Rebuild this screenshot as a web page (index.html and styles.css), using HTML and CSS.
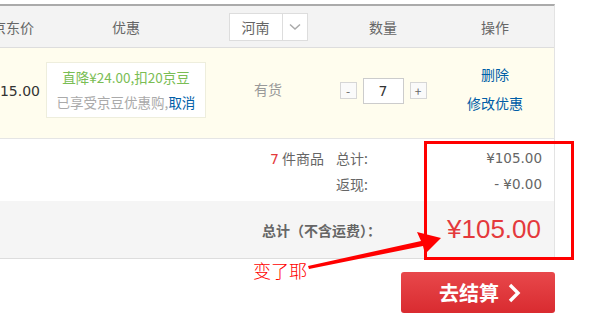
FILE: index.html
```html
<!DOCTYPE html>
<html lang="zh-CN">
<head>
    <meta charset="UTF-8">
    <meta name="viewport" content="width=device-width, initial-scale=1.0">
    <title>购物车</title>
    <link rel="stylesheet" href="styles.css">
</head>
<body>
    <div class="page">
        <div class="cart">
            <div class="cart-head">
                <div class="col">京东价</div>
                <div class="col">优惠</div>
                <div class="col">
                    <div class="area-select">
                        <span class="area-name">河南</span>
                        <span class="area-arrow">
                            <svg width="12" height="8" viewBox="0 0 12 8"><path d="M1 1.5 L6 6 L11 1.5" fill="none" stroke="#aaa" stroke-width="1.5"/></svg>
                        </span>
                    </div>
                </div>
                <div class="col">数量</div>
                <div class="col">操作</div>
            </div>
            <div class="cart-item">
                <div class="col price">¥15.00</div>
                <div class="col">
                    <div class="promo">
                        <div class="promo-main">直降¥24.00,扣20京豆</div>
                        <div class="promo-sub">已享受京豆优惠购,<a href="#">取消</a></div>
                    </div>
                </div>
                <div class="col stock">有货</div>
                <div class="col">
                    <div class="qty">
                        <span class="qty-btn">-</span>
                        <span class="qty-input">7</span>
                        <span class="qty-btn">+</span>
                    </div>
                </div>
                <div class="col ops">
                    <a href="#">删除</a>
                    <a href="#">修改优惠</a>
                </div>
            </div>
            <div class="summary">
                <div class="sum-row">
                    <span class="count"><em>7</em> 件商品</span>
                    <span class="sum-label">总计:</span>
                    <span class="sum-value">¥105.00</span>
                </div>
                <div class="sum-row">
                    <span class="sum-label">返现:</span>
                    <span class="sum-value">- ¥0.00</span>
                </div>
            </div>
            <div class="total">
                <span class="total-label">总计（不含运费）：</span>
                <span class="total-value">¥105.00</span>
            </div>
        </div>
        <div class="checkout-bar">
            <a class="checkout" href="#">去结算
                <svg width="14" height="20" viewBox="0 0 14 20"><path d="M3 2 L11 10 L3 18" fill="none" stroke="#fff" stroke-width="3.4"/></svg>
            </a>
        </div>

        <div class="mark-box"></div>
        <svg class="mark-arrow" width="600" height="321" viewBox="0 0 600 321">
            <polygon points="308,266 421,241 417,232 441,238 425,254 423,246 309,269" fill="#f00"/>
        </svg>
        <div class="mark-note">变了耶</div>
    </div>
</body>
</html>
```

FILE: styles.css
```css
* { box-sizing: border-box; margin: 0; padding: 0; }
body {
    background: #fff;
    font-family: "Noto Sans CJK SC", "Liberation Sans", sans-serif;
    color: #666;
}
a { text-decoration: none; color: #005ea7; }
.page {
    position: relative;
    width: 600px;
    height: 321px;
    overflow: hidden;
    padding-top: 4px;
}
.cart {
    margin-left: -20px;
    width: 575px;
    border-right: 1px solid #e3e3e3;
    border-top: 2px solid #aaa;
}
.cart-head, .cart-item {
    display: grid;
    grid-template-columns: 66px 160px 124px 106px 118px;
    align-items: center;
}
.col { display: flex; justify-content: center; align-items: center; }
.cart-head {
    height: 42px;
    background: #f3f3f3;
    border-bottom: 1px solid #ddd;
    font-size: 14px;
    color: #666;
}
.area-select {
    display: flex;
    width: 79px;
    height: 28px;
    margin-top: 1px;
    background: #fff;
    border: 1px solid #ddd;
}
.area-name {
    width: 53px;
    display: flex;
    justify-content: center;
    align-items: center;
    border-right: 1px solid #ddd;
    font-size: 14px;
}
.area-arrow { flex: 1; display: flex; justify-content: center; align-items: center; }

.cart-item {
    height: 91px;
    padding-bottom: 5px;
    background: #fffdee;
    border-bottom: 1px solid #e5e5e5;
}
.price {
    font-family: "DejaVu Sans", sans-serif;
    font-size: 14px;
    color: #333;
    justify-content: flex-end;
    padding-right: 6px;
}
.promo {
    width: 160px;
    height: 56px;
    margin-top: -2px;
    background: #fff;
    border: 1px solid #eeeedd;
    display: flex;
    flex-direction: column;
    justify-content: center;
    align-items: center;
    gap: 10px;
    font-size: 13.5px;
    line-height: 15px;
}
.promo-main { color: #7abd54; }
.promo-sub { color: #aaa; }
.stock { font-size: 14px; color: #999; margin-top: -3px; }
.qty { display: flex; align-items: center; }
.qty-btn {
    width: 17px;
    height: 17px;
    border: 1px solid #d6d6d6;
    background: #fafafa;
    display: flex;
    justify-content: center;
    align-items: center;
    font-size: 12px;
    line-height: 1;
    color: #666;
}
.qty-input {
    width: 41px;
    height: 26px;
    margin: 0 6px;
    border: 1px solid #ccc;
    background: #fff;
    display: flex;
    justify-content: center;
    align-items: center;
    font-family: "DejaVu Sans", sans-serif;
    font-size: 14px;
    color: #333;
}
.ops {
    flex-direction: column;
    gap: 10px;
    font-size: 14px;
    line-height: 19px;
    margin-top: -3px;
}

.summary {
    padding: 6px 12px 4px 0;
    font-size: 14px;
}
.sum-row {
    display: flex;
    justify-content: flex-end;
    align-items: center;
    height: 26px;
}
.count { margin-right: 12px; }
.count em { font-style: normal; color: #e4393c; font-family: "DejaVu Sans", sans-serif; }
.sum-label { width: 56px; }
.sum-value {
    width: 150px;
    text-align: right;
    font-family: "DejaVu Sans", sans-serif;
    font-size: 13.5px;
    color: #666;
}
.total {
    display: flex;
    justify-content: flex-end;
    align-items: center;
    height: 58px;
    padding-right: 13px;
    background: #f5f5f5;
    border-bottom: 1px solid #ddd;
}
.total-label { font-size: 14px; font-weight: bold; color: #666; margin-right: 10px; }
.total-value {
    width: 150px;
    text-align: right;
    font-family: "Liberation Sans", sans-serif;
    font-size: 26px;
    color: #e4393c;
}

.checkout-bar {
    width: 555px;
    padding-top: 13px;
    display: flex;
    justify-content: flex-end;
}
.checkout {
    width: 154px;
    height: 41px;
    border-radius: 3px;
    background: linear-gradient(#e8484b, #d92b30);
    color: #fff;
    font-size: 20px;
    font-weight: bold;
    display: flex;
    justify-content: center;
    align-items: center;
    gap: 8px;
    padding-left: 4px;
}

.mark-box {
    position: absolute;
    left: 424px;
    top: 141px;
    width: 150px;
    height: 119px;
    border: 3px solid #f00;
}
.mark-arrow { position: absolute; left: 0; top: 0; }
.mark-note {
    position: absolute;
    left: 253px;
    top: 258px;
    font-size: 18px;
    line-height: 24px;
    color: #f00;
    font-weight: 300;
}
```
